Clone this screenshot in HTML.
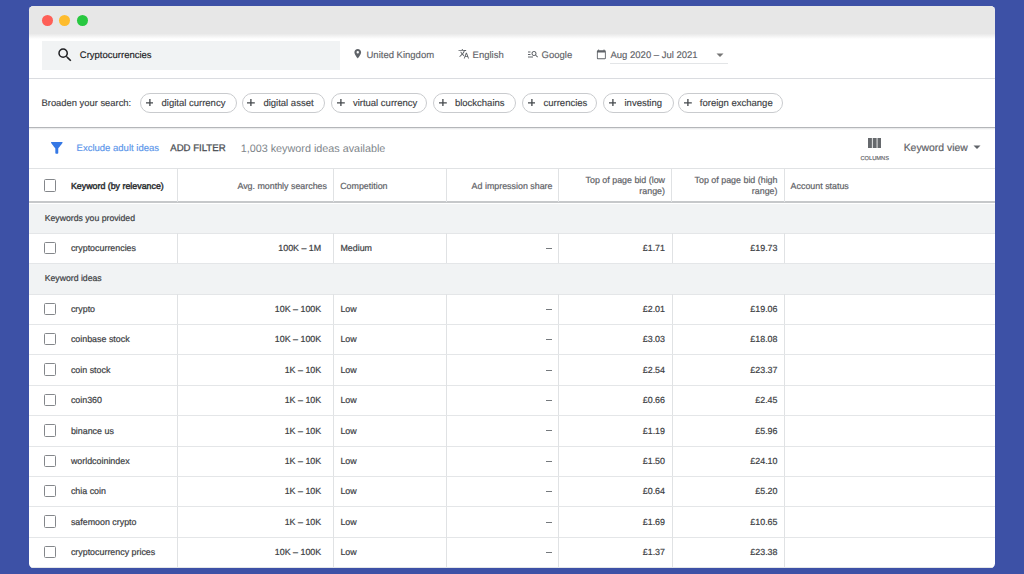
<!DOCTYPE html>
<html><head><meta charset="utf-8">
<style>
*{box-sizing:border-box;margin:0;padding:0}
html,body{width:1024px;height:574px;overflow:hidden;background:#3d51a6;font-family:"Liberation Sans",sans-serif;text-rendering:geometricPrecision}
.a{position:absolute;white-space:nowrap}
#win{position:absolute;left:29px;top:6px;width:965.5px;height:561.5px;border-radius:4.5px;background:#fff;overflow:hidden}
#tb{position:absolute;left:0;top:0;width:966px;height:28.4px;background:#e7e7e7}
#tbs{position:absolute;left:0;top:28.4px;width:966px;height:4.6px;background:linear-gradient(#e9e9e9,#fff)}
.dot{position:absolute;top:9.2px;width:11px;height:11px;border-radius:50%}
.t{position:absolute;white-space:nowrap;line-height:1}
.sy{}
.chip{position:absolute;top:87.1px;height:19.5px;border:1px solid #c9cbce;border-radius:10px}
.chip .pl{position:absolute;left:4.6px;top:4.6px;width:7.8px;height:7.8px}
.chip span{position:absolute;left:20.5px;top:4.9px;font-size:9.5px;line-height:10px;color:#3c4043;-webkit-text-stroke:0.15px #3c4043}
.hl{position:absolute;left:0;width:966px;height:1px;background:#e4e6e8}
.vl{position:absolute;width:1px;background:#e0e2e4}
.gray{position:absolute;left:0;width:966px;background:#f1f3f4}
.cb{position:absolute;left:15px;width:12.4px;height:12.6px;border:1.5px solid #84878b;border-radius:1.5px}
.kw{position:absolute;left:41.9px;font-size:8.9px;line-height:10px;color:#3c4043;-webkit-text-stroke:0.2px #3c4043}
.num{position:absolute;font-size:8.9px;line-height:10px;color:#3c4043;text-align:right;-webkit-text-stroke:0.2px #3c4043}
.dash{position:absolute;left:517px;width:6px;height:1px;background:#75797d}
.hd{position:absolute;font-size:8.9px;line-height:10px;color:#5f6368}
</style></head><body>
<div id="win">
  <div id="tb"></div><div id="tbs"></div>
  <div class="dot" style="left:12.6px;background:#fe5f57"></div>
  <div class="dot" style="left:30.2px;background:#febc2e"></div>
  <div class="dot" style="left:47.8px;background:#28c840"></div>

  <!-- search header -->
  <div style="position:absolute;left:12.7px;top:34.8px;width:298.3px;height:29px;background:#f1f3f4"></div>
  <svg class="a" style="left:27px;top:39.75px" width="18" height="18" viewBox="0 0 24 24"><path fill="#202124" d="M15.5 14h-.79l-.28-.27A6.47 6.47 0 0 0 16 9.5 6.5 6.5 0 1 0 9.5 16c1.61 0 3.09-.59 4.23-1.57l.27.28v.79l5 4.99L20.49 19l-4.99-5zm-6 0C7.01 14 5 11.99 5 9.5S7.01 5 9.5 5 14 7.01 14 9.5 11.99 14 9.5 14z"/></svg>
  <div class="t sy" style="left:50.8px;top:44.5px;font-size:9.5px;color:#202124;-webkit-text-stroke:0.15px #202124">Cryptocurrencies</div>

  <svg class="a" style="left:322.9px;top:41.8px" width="11.5" height="11.5" viewBox="0 0 24 24"><path fill="#5f6368" d="M12 2C8.13 2 5 5.13 5 9c0 5.25 7 13 7 13s7-7.75 7-13c0-3.87-3.13-7-7-7zm0 9.5a2.5 2.5 0 0 1 0-5 2.5 2.5 0 0 1 0 5z"/></svg>
  <div class="t sy" style="left:337.5px;top:44.5px;font-size:9.5px;color:#5f6368;-webkit-text-stroke:0.15px #5f6368">United Kingdom</div>

  <svg class="a" style="left:429px;top:41.8px" width="11.5" height="11.5" viewBox="0 0 24 24"><path fill="#5f6368" d="M12.87 15.07l-2.54-2.51.03-.03A17.52 17.52 0 0 0 14.07 6H17V4h-7V2H8v2H1v1.99h11.17C11.5 7.92 10.44 9.75 9 11.35 8.07 10.32 7.3 9.19 6.69 8h-2c.73 1.63 1.73 3.17 2.98 4.56l-5.09 5.02L4 19l5-5 3.11 3.11.76-2.04zM18.5 10h-2L12 22h2l1.12-3h4.75L21 22h2l-4.5-12zm-2.62 7l1.62-4.33L19.12 17h-3.24z"/></svg>
  <div class="t sy" style="left:443.6px;top:44.5px;font-size:9.5px;color:#5f6368;-webkit-text-stroke:0.15px #5f6368">English</div>

  <svg class="a" style="left:497.5px;top:42px" width="12" height="12" viewBox="0 0 24 24"><path fill="#5f6368" d="M7 9H2V7h5v2zm0 3H2v2h5v-2zm13.59 7l-3.83-3.83c-.8.52-1.74.83-2.76.83-2.76 0-5-2.24-5-5s2.24-5 5-5 5 2.24 5 5c0 1.02-.31 1.96-.83 2.75L22 17.59 20.59 19zM17 11c0-1.65-1.35-3-3-3s-3 1.35-3 3 1.35 3 3 3 3-1.35 3-3zM2 19h10v-2H2v2z"/></svg>
  <div class="t sy" style="left:512.6px;top:44.5px;font-size:9.5px;color:#5f6368;-webkit-text-stroke:0.15px #5f6368">Google</div>

  <svg class="a" style="left:567.1px;top:43.15px" width="10.7" height="10.7" viewBox="0 0 24 24"><path fill="#5f6368" d="M20 3h-1V1h-2v2H7V1H5v2H4c-1.1 0-2 .9-2 2v16c0 1.1.9 2 2 2h16c1.1 0 2-.9 2-2V5c0-1.1-.9-2-2-2zm0 18H4V8h16v13z"/></svg>
  <div class="t sy" style="left:581.5px;top:44.5px;font-size:9.5px;color:#5f6368;-webkit-text-stroke:0.15px #5f6368">Aug 2020 – Jul 2021</div>
  <svg class="a" style="left:686px;top:44px" width="10" height="10" viewBox="0 0 10 10"><path fill="#757575" d="M1.5 3.5h7L5 7z"/></svg>
  <div style="position:absolute;left:581px;top:57.2px;width:118px;height:1px;background:#e3e5e7"></div>

  <div class="hl" style="top:71.6px;background:#dadce0"></div>

  <!-- broaden -->
  <div class="t sy" style="left:12.5px;top:92px;font-size:9.4px;color:#3c4043;-webkit-text-stroke:0.15px #3c4043">Broaden your search:</div>
  <div class="chip" style="left:111px;width:97px"><svg class="pl" viewBox="0 0 8 8"><path d="M4 0v8M0 4h8" stroke="#45494d" stroke-width="1.35"/></svg><span>digital currency</span></div>
  <div class="chip" style="left:212.9px;width:82.8px"><svg class="pl" viewBox="0 0 8 8"><path d="M4 0v8M0 4h8" stroke="#45494d" stroke-width="1.35"/></svg><span>digital asset</span></div>
  <div class="chip" style="left:302.4px;width:95.6px"><svg class="pl" viewBox="0 0 8 8"><path d="M4 0v8M0 4h8" stroke="#45494d" stroke-width="1.35"/></svg><span>virtual currency</span></div>
  <div class="chip" style="left:404.4px;width:82.3px"><svg class="pl" viewBox="0 0 8 8"><path d="M4 0v8M0 4h8" stroke="#45494d" stroke-width="1.35"/></svg><span>blockchains</span></div>
  <div class="chip" style="left:493px;width:75px"><svg class="pl" viewBox="0 0 8 8"><path d="M4 0v8M0 4h8" stroke="#45494d" stroke-width="1.35"/></svg><span>currencies</span></div>
  <div class="chip" style="left:574px;width:70.5px"><svg class="pl" viewBox="0 0 8 8"><path d="M4 0v8M0 4h8" stroke="#45494d" stroke-width="1.35"/></svg><span>investing</span></div>
  <div class="chip" style="left:649.3px;width:104.3px"><svg class="pl" viewBox="0 0 8 8"><path d="M4 0v8M0 4h8" stroke="#45494d" stroke-width="1.35"/></svg><span>foreign exchange</span></div>

  <div class="hl" style="top:120.6px;height:1.8px;background:#b4b6b9"></div><div class="hl" style="top:122.4px;height:1.5px;background:linear-gradient(#e4e5e6,#fff)"></div>

  <!-- filter row -->
  <svg class="a" style="left:18.6px;top:133.1px" width="17.6" height="17.6" viewBox="0 0 24 24"><path fill="#3578e5" d="M4.25 5.61C6.27 8.2 10 13 10 13v6c0 .55.45 1 1 1h2c.55 0 1-.45 1-1v-6s3.72-4.8 5.74-7.39A.998.998 0 0 0 18.95 4H5.04c-.83 0-1.3.95-.79 1.61z"/></svg>
  <div class="t" style="left:47.6px;top:137.6px;font-size:9.5px;color:#5a95ea;-webkit-text-stroke:0.15px #5a95ea">Exclude adult ideas</div>
  <div class="t" style="left:141.3px;top:137.6px;font-size:9.6px;color:#4d5156;-webkit-text-stroke:0.3px #4d5156">ADD FILTER</div>
  <div class="t" style="left:211.7px;top:137.5px;font-size:10.8px;color:#80868b">1,003 keyword ideas available</div>

  <svg class="a" style="left:838.9px;top:131.7px" width="13.4" height="10.2" viewBox="0 0 13.4 10.2"><path fill="#66696d" d="M0 0h3.9v10.2H0zM4.75 0h3.9v10.2H4.75zM9.5 0h3.9v10.2H9.5z"/></svg>
  <div class="t" style="left:831.5px;top:150.8px;font-size:5.7px;color:#5f6368;-webkit-text-stroke:0.15px #5f6368">COLUMNS</div>
  <div class="t" style="left:874.7px;top:137.7px;font-size:10.4px;color:#5f6368;-webkit-text-stroke:0.2px #5f6368">Keyword view</div>
  <svg class="a" style="left:943px;top:136px" width="10" height="10" viewBox="0 0 10 10"><path fill="#5f6368" d="M1.5 3.5h7L5 7z"/></svg>

  <!-- table header -->
  <div class="hl" style="top:162px;background:#e0e2e4"></div>
  <div class="hl" style="top:195.3px;height:2px;background:#c6c8ca"></div>
  <div class="vl" style="left:148px;top:162.5px;height:33px"></div>
  <div class="vl" style="left:304px;top:162.5px;height:33px"></div>
  <div class="vl" style="left:417px;top:162.5px;height:33px"></div>
  <div class="vl" style="left:529px;top:162.5px;height:33px"></div>
  <div class="vl" style="left:642px;top:162.5px;height:33px"></div>
  <div class="vl" style="left:755px;top:162.5px;height:33px"></div>
  <div class="cb" style="top:173.4px"></div>
  <div class="t" style="left:41.9px;top:175.8px;font-size:8.85px;color:#303336;-webkit-text-stroke:0.45px #303336">Keyword (by relevance)</div>
  <div class="t" style="right:667.5px;top:176px;font-size:8.9px;color:#5f6368;-webkit-text-stroke:0.2px #5f6368">Avg. monthly searches</div>
  <div class="t" style="left:311.2px;top:176px;font-size:8.9px;color:#5f6368;-webkit-text-stroke:0.2px #5f6368">Competition</div>
  <div class="t" style="right:442px;top:176px;font-size:8.9px;color:#5f6368;-webkit-text-stroke:0.2px #5f6368">Ad impression share</div>
  <div class="t" style="right:329.5px;top:169.4px;font-size:8.9px;line-height:10.4px;color:#5f6368;-webkit-text-stroke:0.2px #5f6368;text-align:right">Top of page bid (low<br>range)</div>
  <div class="t" style="right:217px;top:169.4px;font-size:8.9px;line-height:10.4px;color:#5f6368;-webkit-text-stroke:0.2px #5f6368;text-align:right">Top of page bid (high<br>range)</div>
  <div class="t" style="left:761.6px;top:176px;font-size:8.9px;color:#5f6368;-webkit-text-stroke:0.2px #5f6368">Account status</div>

  <div id="rows">
  <div class="gray" style="top:197.5px;height:29.8px"></div>
  <div class="t" style="left:15.7px;top:207.5px;font-size:8.7px;color:#3c4043;-webkit-text-stroke:0.2px #3c4043">Keywords you provided</div>
  <div class="hl" style="top:226.8px"></div>
  <div class="vl" style="left:148px;top:227.30px;height:30.40px"></div>
  <div class="vl" style="left:304px;top:227.30px;height:30.40px"></div>
  <div class="vl" style="left:417px;top:227.30px;height:30.40px"></div>
  <div class="vl" style="left:529px;top:227.30px;height:30.40px"></div>
  <div class="vl" style="left:643px;top:227.30px;height:30.40px"></div>
  <div class="vl" style="left:755px;top:227.30px;height:30.40px"></div>
  <div class="cb" style="top:235.70px"></div>
  <div class="kw" style="top:237.10px">cryptocurrencies</div>
  <div class="num" style="right:673.3px;top:237.10px">100K – 1M</div>
  <div class="kw" style="left:311.4px;top:237.10px">Medium</div>
  <div class="dash" style="top:241.90px"></div>
  <div class="num" style="right:329.5px;top:237.10px">£1.71</div>
  <div class="num" style="right:217px;top:237.10px">£19.73</div>
  <div class="hl" style="top:257.20px"></div>
  <div class="gray" style="top:257.70px;height:30.40px"></div>
  <div class="t" style="left:15.7px;top:267.90px;font-size:8.7px;color:#3c4043;-webkit-text-stroke:0.2px #3c4043">Keyword ideas</div>
  <div class="hl" style="top:287.60px"></div>
  <div class="vl" style="left:148px;top:288.10px;height:30.40px"></div>
  <div class="vl" style="left:304px;top:288.10px;height:30.40px"></div>
  <div class="vl" style="left:417px;top:288.10px;height:30.40px"></div>
  <div class="vl" style="left:529px;top:288.10px;height:30.40px"></div>
  <div class="vl" style="left:643px;top:288.10px;height:30.40px"></div>
  <div class="vl" style="left:755px;top:288.10px;height:30.40px"></div>
  <div class="cb" style="top:296.50px"></div>
  <div class="kw" style="top:297.90px">crypto</div>
  <div class="num" style="right:673.3px;top:297.90px">10K – 100K</div>
  <div class="kw" style="left:311.4px;top:297.90px">Low</div>
  <div class="dash" style="top:302.70px"></div>
  <div class="num" style="right:329.5px;top:297.90px">£2.01</div>
  <div class="num" style="right:217px;top:297.90px">£19.06</div>
  <div class="hl" style="top:318.00px"></div>
  <div class="vl" style="left:148px;top:318.50px;height:30.40px"></div>
  <div class="vl" style="left:304px;top:318.50px;height:30.40px"></div>
  <div class="vl" style="left:417px;top:318.50px;height:30.40px"></div>
  <div class="vl" style="left:529px;top:318.50px;height:30.40px"></div>
  <div class="vl" style="left:643px;top:318.50px;height:30.40px"></div>
  <div class="vl" style="left:755px;top:318.50px;height:30.40px"></div>
  <div class="cb" style="top:326.90px"></div>
  <div class="kw" style="top:328.30px">coinbase stock</div>
  <div class="num" style="right:673.3px;top:328.30px">10K – 100K</div>
  <div class="kw" style="left:311.4px;top:328.30px">Low</div>
  <div class="dash" style="top:333.10px"></div>
  <div class="num" style="right:329.5px;top:328.30px">£3.03</div>
  <div class="num" style="right:217px;top:328.30px">£18.08</div>
  <div class="hl" style="top:348.40px"></div>
  <div class="vl" style="left:148px;top:348.90px;height:30.40px"></div>
  <div class="vl" style="left:304px;top:348.90px;height:30.40px"></div>
  <div class="vl" style="left:417px;top:348.90px;height:30.40px"></div>
  <div class="vl" style="left:529px;top:348.90px;height:30.40px"></div>
  <div class="vl" style="left:643px;top:348.90px;height:30.40px"></div>
  <div class="vl" style="left:755px;top:348.90px;height:30.40px"></div>
  <div class="cb" style="top:357.30px"></div>
  <div class="kw" style="top:358.70px">coin stock</div>
  <div class="num" style="right:673.3px;top:358.70px">1K – 10K</div>
  <div class="kw" style="left:311.4px;top:358.70px">Low</div>
  <div class="dash" style="top:363.50px"></div>
  <div class="num" style="right:329.5px;top:358.70px">£2.54</div>
  <div class="num" style="right:217px;top:358.70px">£23.37</div>
  <div class="hl" style="top:378.80px"></div>
  <div class="vl" style="left:148px;top:379.30px;height:30.40px"></div>
  <div class="vl" style="left:304px;top:379.30px;height:30.40px"></div>
  <div class="vl" style="left:417px;top:379.30px;height:30.40px"></div>
  <div class="vl" style="left:529px;top:379.30px;height:30.40px"></div>
  <div class="vl" style="left:643px;top:379.30px;height:30.40px"></div>
  <div class="vl" style="left:755px;top:379.30px;height:30.40px"></div>
  <div class="cb" style="top:387.70px"></div>
  <div class="kw" style="top:389.10px">coin360</div>
  <div class="num" style="right:673.3px;top:389.10px">1K – 10K</div>
  <div class="kw" style="left:311.4px;top:389.10px">Low</div>
  <div class="dash" style="top:393.90px"></div>
  <div class="num" style="right:329.5px;top:389.10px">£0.66</div>
  <div class="num" style="right:217px;top:389.10px">£2.45</div>
  <div class="hl" style="top:409.20px"></div>
  <div class="vl" style="left:148px;top:409.70px;height:30.40px"></div>
  <div class="vl" style="left:304px;top:409.70px;height:30.40px"></div>
  <div class="vl" style="left:417px;top:409.70px;height:30.40px"></div>
  <div class="vl" style="left:529px;top:409.70px;height:30.40px"></div>
  <div class="vl" style="left:643px;top:409.70px;height:30.40px"></div>
  <div class="vl" style="left:755px;top:409.70px;height:30.40px"></div>
  <div class="cb" style="top:418.10px"></div>
  <div class="kw" style="top:419.50px">binance us</div>
  <div class="num" style="right:673.3px;top:419.50px">1K – 10K</div>
  <div class="kw" style="left:311.4px;top:419.50px">Low</div>
  <div class="dash" style="top:424.30px"></div>
  <div class="num" style="right:329.5px;top:419.50px">£1.19</div>
  <div class="num" style="right:217px;top:419.50px">£5.96</div>
  <div class="hl" style="top:439.60px"></div>
  <div class="vl" style="left:148px;top:440.10px;height:30.40px"></div>
  <div class="vl" style="left:304px;top:440.10px;height:30.40px"></div>
  <div class="vl" style="left:417px;top:440.10px;height:30.40px"></div>
  <div class="vl" style="left:529px;top:440.10px;height:30.40px"></div>
  <div class="vl" style="left:643px;top:440.10px;height:30.40px"></div>
  <div class="vl" style="left:755px;top:440.10px;height:30.40px"></div>
  <div class="cb" style="top:448.50px"></div>
  <div class="kw" style="top:449.90px">worldcoinindex</div>
  <div class="num" style="right:673.3px;top:449.90px">1K – 10K</div>
  <div class="kw" style="left:311.4px;top:449.90px">Low</div>
  <div class="dash" style="top:454.70px"></div>
  <div class="num" style="right:329.5px;top:449.90px">£1.50</div>
  <div class="num" style="right:217px;top:449.90px">£24.10</div>
  <div class="hl" style="top:470.00px"></div>
  <div class="vl" style="left:148px;top:470.50px;height:30.40px"></div>
  <div class="vl" style="left:304px;top:470.50px;height:30.40px"></div>
  <div class="vl" style="left:417px;top:470.50px;height:30.40px"></div>
  <div class="vl" style="left:529px;top:470.50px;height:30.40px"></div>
  <div class="vl" style="left:643px;top:470.50px;height:30.40px"></div>
  <div class="vl" style="left:755px;top:470.50px;height:30.40px"></div>
  <div class="cb" style="top:478.90px"></div>
  <div class="kw" style="top:480.30px">chia coin</div>
  <div class="num" style="right:673.3px;top:480.30px">1K – 10K</div>
  <div class="kw" style="left:311.4px;top:480.30px">Low</div>
  <div class="dash" style="top:485.10px"></div>
  <div class="num" style="right:329.5px;top:480.30px">£0.64</div>
  <div class="num" style="right:217px;top:480.30px">£5.20</div>
  <div class="hl" style="top:500.40px"></div>
  <div class="vl" style="left:148px;top:500.90px;height:30.40px"></div>
  <div class="vl" style="left:304px;top:500.90px;height:30.40px"></div>
  <div class="vl" style="left:417px;top:500.90px;height:30.40px"></div>
  <div class="vl" style="left:529px;top:500.90px;height:30.40px"></div>
  <div class="vl" style="left:643px;top:500.90px;height:30.40px"></div>
  <div class="vl" style="left:755px;top:500.90px;height:30.40px"></div>
  <div class="cb" style="top:509.30px"></div>
  <div class="kw" style="top:510.70px">safemoon crypto</div>
  <div class="num" style="right:673.3px;top:510.70px">1K – 10K</div>
  <div class="kw" style="left:311.4px;top:510.70px">Low</div>
  <div class="dash" style="top:515.50px"></div>
  <div class="num" style="right:329.5px;top:510.70px">£1.69</div>
  <div class="num" style="right:217px;top:510.70px">£10.65</div>
  <div class="hl" style="top:530.80px"></div>
  <div class="vl" style="left:148px;top:531.30px;height:30.40px"></div>
  <div class="vl" style="left:304px;top:531.30px;height:30.40px"></div>
  <div class="vl" style="left:417px;top:531.30px;height:30.40px"></div>
  <div class="vl" style="left:529px;top:531.30px;height:30.40px"></div>
  <div class="vl" style="left:643px;top:531.30px;height:30.40px"></div>
  <div class="vl" style="left:755px;top:531.30px;height:30.40px"></div>
  <div class="cb" style="top:539.70px"></div>
  <div class="kw" style="top:541.10px">cryptocurrency prices</div>
  <div class="num" style="right:673.3px;top:541.10px">10K – 100K</div>
  <div class="kw" style="left:311.4px;top:541.10px">Low</div>
  <div class="dash" style="top:545.90px"></div>
  <div class="num" style="right:329.5px;top:541.10px">£1.37</div>
  <div class="num" style="right:217px;top:541.10px">£23.38</div>
  <div class="hl" style="top:561.20px"></div>
  </div>
</div>
</body></html>
